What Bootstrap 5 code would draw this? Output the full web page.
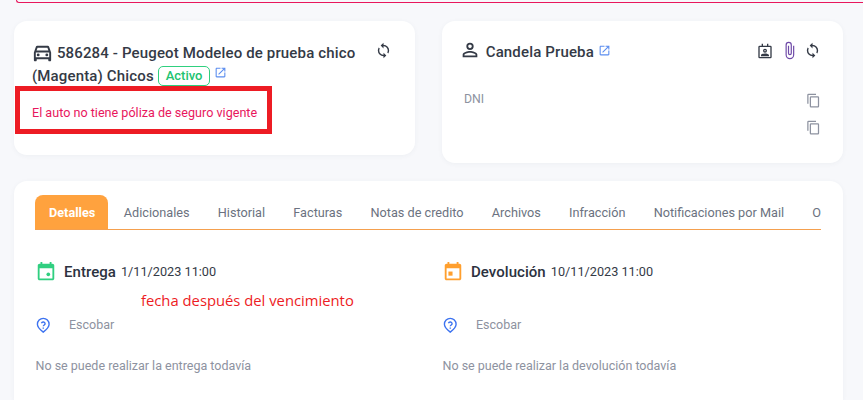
<!DOCTYPE html>
<html lang="es">
<head>
<meta charset="utf-8">
<title>Reserva</title>
<link href="https://cdn.jsdelivr.net/npm/bootstrap@5.3.0/dist/css/bootstrap.min.css" rel="stylesheet">
<style>
html,body{height:400px;overflow:hidden}
body{background:#f7f8fb;font-family:Roboto,"Liberation Sans",sans-serif;font-size:13px;color:#343a46;position:relative}
.top-alert{height:3px;margin-left:16px;border-left:1px solid #e8175d;border-bottom:1px solid #e8175d;border-bottom-left-radius:6px}
.upper-row{display:flex;gap:27px;align-items:flex-start;padding:18px 20px 0 14px}
.soft-card{border:0;border-radius:13px;box-shadow:0 1px 5px rgba(60,70,90,.05);background:#fff}
.car-card{width:401px;height:134px;padding:20px 18px}
.person-card{width:401px;height:142px;padding:20px 22px}
.ttl{font-size:15px;font-weight:500;line-height:22.500px;color:#343a46;letter-spacing:.15px}
.ic{display:inline-block;fill:currentColor;flex:none}
.car-line{display:flex;justify-content:space-between}
.car-ttl{width:330px}
.car-ic{width:23px;height:23px;vertical-align:-6px;margin:0 -1px 0 -1px}
.sync-ic{width:17px;height:17px;margin:1px 5px 0 0}
.link-ic{width:13px;height:13px;color:#5b8def;vertical-align:2px;margin-left:1px}
.car-link{margin-left:0;vertical-align:2px}
.state{display:inline-block;border:1px solid #2fd07f;border-radius:5px;color:#22c370;font-size:13px;font-weight:500;line-height:18px;padding:0 7px;vertical-align:1px;letter-spacing:0}
.warn{color:#e8175d;font-size:12.6px;margin:17px 0 0;line-height:18px}
.dni-row{margin-top:27px}
.dni{font-size:12.3px;color:#8d92a0;line-height:16px}
.copy-ic{width:15px;height:15px;color:#8d92a0}
.copy-stack{gap:12px;margin-top:2px}
.person-ic{width:22px;height:22px;margin:-4px 4.700px 0 -5px}
.person-acts{margin-bottom:3px}
.badge-ic{width:16px;height:16px}
.clip-ic{width:19px;height:19px;color:#6f4aa8;margin:0 5px 0 7.500px}
.wide-card{margin:18px 20px 0 14px;height:219px;padding:14px 22px 0 21px;border-bottom-left-radius:0;border-bottom-right-radius:0}
.tabs-row{flex-wrap:nowrap;overflow:hidden;border-bottom:1px solid #f5a04e;height:35px}
.tabs-row .nav-link{border:0;border-radius:8px 8px 0 0;color:#6b7280;font-size:12.7px;line-height:35px;padding:0 14.100px;white-space:nowrap;height:34px;margin:0}
.tabs-row .nav-link.active{background:#ffa23e;color:#fff;font-weight:700;padding:0 12.900px 0 14px;margin-right:1.600px}
.tabs-row .nav-item:last-child .nav-link{padding-right:0}
.two-col{display:flex;margin-top:31px}
.half{width:407px;flex:none}
.ev-head{display:flex;align-items:center;height:22px}
.cal-ic{width:22px;height:22px;margin-right:6px}
.green{color:#30cf80}.orange{color:#ff9f2e}
.ev-name{font-size:15px;font-weight:500;color:#2c3240;letter-spacing:.05px;margin-right:5px;margin-left:1px}
.ev-date{font-size:12.7px;color:#343a46}
.place{display:flex;align-items:center;margin-top:33px;height:18px;font-size:12.5px;color:#8d92a0}
.pin-ic{width:16.500px;height:16.500px;fill:none;stroke:#3d73f0;stroke-width:2;margin:0 17.500px 0 0}
.note{font-size:12.5px;color:#8d92a0;margin:23px 0 0 .5px;line-height:18px}
.mark-box{position:absolute;left:15px;top:86px;width:257px;height:48px;border:5px solid #ed1c24}
.mark-text{position:absolute;left:141px;top:290px;font-family:"Open Sans","Liberation Sans",sans-serif;font-size:14.8px;line-height:21px;color:#ed1c24}
</style>
</head>
<body>
<svg width="0" height="0" class="position-absolute">
<defs>
<symbol id="i-sync" viewBox="0 0 24 24"><path d="M12,18A6,6 0 0,1 6,12C6,11 6.25,10.03 6.7,9.2L5.24,7.74C4.46,8.97 4,10.43 4,12A8,8 0 0,0 12,20V23L16,19L12,15M12,4V1L8,5L12,9V6A6,6 0 0,1 18,12C18,13 17.75,13.97 17.3,14.8L18.76,16.26C19.54,15.03 20,13.57 20,12A8,8 0 0,0 12,4Z"/></symbol>
<symbol id="i-link" viewBox="0 0 24 24"><path d="M19 19H5V5h7V3H5c-1.11 0-2 .9-2 2v14c0 1.1.89 2 2 2h14c1.1 0 2-.9 2-2v-7h-2v7zM14 3v2h3.59l-9.83 9.83 1.41 1.41L19 6.41V10h2V3h-7z"/></symbol>
<symbol id="i-copy" viewBox="0 0 24 24"><path d="M19,21H8V7H19M19,5H8A2,2 0 0,0 6,7V21A2,2 0 0,0 8,23H19A2,2 0 0,0 21,21V7A2,2 0 0,0 19,5M16,1H4A2,2 0 0,0 2,3V17H4V3H16V1Z"/></symbol>
<symbol id="i-pin" viewBox="0 0 24 24"><path d="M12 2a8.500 8.500 0 0 0-8.500 8.500C3.500 15.500 12 22 12 22s8.500-6.500 8.500-11.500A8.500 8.500 0 0 0 12 2z"/><path d="M9.300 9a2.800 2.800 0 0 1 5.400.8c0 1.700-2.700 2-2.700 3.700M12 15.200v1.800"/></symbol>
</defs>
</svg>

<div class="top-alert"></div>

<div class="upper-row">
  <div class="card soft-card car-card">
    <div class="car-line">
      <div class="ttl car-ttl">
        <svg class="ic car-ic" viewBox="0 0 24 24"><path d="M18.920 6.010C18.720 5.420 18.160 5 17.500 5h-11c-.66 0-1.210.42-1.420 1.010L3 12v8c0 .55.45 1 1 1h1c.55 0 1-.45 1-1v-1h12v1c0 .55.45 1 1 1h1c.55 0 1-.45 1-1v-8l-2.080-5.990zM6.850 7h10.290l1.040 3H5.810l1.040-3zM19 17H5v-5h14v5z"/><circle cx="7.500" cy="14.500" r="1.500"/><circle cx="16.500" cy="14.500" r="1.500"/></svg>
        586284 - Peugeot Modeleo de prueba chico (Magenta) Chicos <span class="state">Activo</span> <svg class="ic link-ic car-link"><use href="#i-link"/></svg>
      </div>
      <svg class="ic sync-ic"><use href="#i-sync"/></svg>
    </div>
    <p class="warn">El auto no tiene póliza de seguro vigente</p>
  </div>

  <div class="card soft-card person-card">
    <div class="d-flex justify-content-between align-items-center">
      <div class="ttl d-flex align-items-center">
        <svg class="ic person-ic" viewBox="0 0 24 24"><path d="M12,4A4,4 0 0,1 16,8A4,4 0 0,1 12,12A4,4 0 0,1 8,8A4,4 0 0,1 12,4M12,6A2,2 0 0,0 10,8A2,2 0 0,0 12,10A2,2 0 0,0 14,8A2,2 0 0,0 12,6M12,13C14.670,13 20,14.330 20,17V20H4V17C4,14.330 9.330,13 12,13M12,14.900C9.030,14.900 5.900,16.360 5.900,17V18.100H18.100V17C18.100,16.360 14.970,14.900 12,14.900Z"/></svg>
        <span>Candela Prueba</span>
        <svg class="ic link-ic ms-1 mb-1"><use href="#i-link"/></svg>
      </div>
      <div class="d-flex align-items-center person-acts">
        <svg class="ic badge-ic" viewBox="0 0 24 24"><path d="M7 1h2v3h6V1h2v3h3a2 2 0 0 1 2 2v15a2 2 0 0 1-2 2H4a2 2 0 0 1-2-2V6a2 2 0 0 1 2-2h3zM4 6v15h16V6zm8 2.500a3 3 0 1 1 0 6 3 3 0 0 1 0-6zm0 2a1 1 0 1 0 0 2 1 1 0 0 0 0-2zM6 20v-1.500c0-1.700 3.500-2.700 6-2.700s6 1 6 2.700V20z"/></svg>
        <svg class="ic clip-ic" viewBox="0 0 24 24"><path d="M16.500,6V17.500A4,4 0 0,1 12.500,21.500A4,4 0 0,1 8.500,17.500V5A2.500,2.500 0 0,1 11,2.500A2.500,2.500 0 0,1 13.500,5V15.500A1,1 0 0,1 12.500,16.500A1,1 0 0,1 11.500,15.500V6H10V15.500A2.500,2.500 0 0,0 12.500,18A2.500,2.500 0 0,0 15,15.500V5A4,4 0 0,0 11,1A4,4 0 0,0 7,5V17.500A5.500,5.500 0 0,0 12.500,23A5.500,5.500 0 0,0 18,17.500V6H16.500Z"/></svg>
        <svg class="ic sync-ic m-0"><use href="#i-sync"/></svg>
      </div>
    </div>
    <div class="d-flex justify-content-between dni-row">
      <span class="dni">DNI</span>
      <span class="d-flex flex-column copy-stack">
        <svg class="ic copy-ic"><use href="#i-copy"/></svg>
        <svg class="ic copy-ic"><use href="#i-copy"/></svg>
      </span>
    </div>
  </div>
</div>

<div class="card soft-card wide-card">
  <ul class="nav tabs-row">
    <li class="nav-item"><a class="nav-link active" href="#">Detalles</a></li>
    <li class="nav-item"><a class="nav-link" href="#">Adicionales</a></li>
    <li class="nav-item"><a class="nav-link" href="#">Historial</a></li>
    <li class="nav-item"><a class="nav-link" href="#">Facturas</a></li>
    <li class="nav-item"><a class="nav-link" href="#">Notas de credito</a></li>
    <li class="nav-item"><a class="nav-link" href="#">Archivos</a></li>
    <li class="nav-item"><a class="nav-link" href="#">Infracción</a></li>
    <li class="nav-item"><a class="nav-link" href="#">Notificaciones por Mail</a></li>
    <li class="nav-item"><a class="nav-link" href="#">O</a></li>
  </ul>
  <div class="two-col">
    <div class="half">
      <div class="ev-head">
        <svg class="ic cal-ic green" viewBox="0 0 24 24"><path d="M19 3h-1V1h-2v2H8V1H6v2H5C3.890 3 3 3.900 3 5v14c0 1.100.89 2 2 2h14c1.100 0 2-.9 2-2V5c0-1.100-.9-2-2-2zm0 16H5V8h14v11z"/><circle cx="14.500" cy="14.500" r="2"/></svg>
        <span class="ev-name">Entrega</span><span class="ev-date">1/11/2023 11:00</span>
      </div>
      <div class="place"><svg class="ic pin-ic"><use href="#i-pin"/></svg>Escobar</div>
      <p class="note">No se puede realizar la entrega todavía</p>
    </div>
    <div class="half">
      <div class="ev-head">
        <svg class="ic cal-ic orange" viewBox="0 0 24 24"><path d="M19 3h-1V1h-2v2H8V1H6v2H5C3.890 3 3 3.900 3 5v14c0 1.100.89 2 2 2h14c1.100 0 2-.9 2-2V5c0-1.100-.9-2-2-2zm0 16H5V8h14v11z"/><path d="M7 11.500h4.500V16H7z"/></svg>
        <span class="ev-name">Devolución</span><span class="ev-date">10/11/2023 11:00</span>
      </div>
      <div class="place"><svg class="ic pin-ic"><use href="#i-pin"/></svg>Escobar</div>
      <p class="note">No se puede realizar la devolución todavía</p>
    </div>
  </div>
</div>

<div class="mark-box"></div>
<div class="mark-text">fecha después del vencimiento</div>
</body>
</html>
